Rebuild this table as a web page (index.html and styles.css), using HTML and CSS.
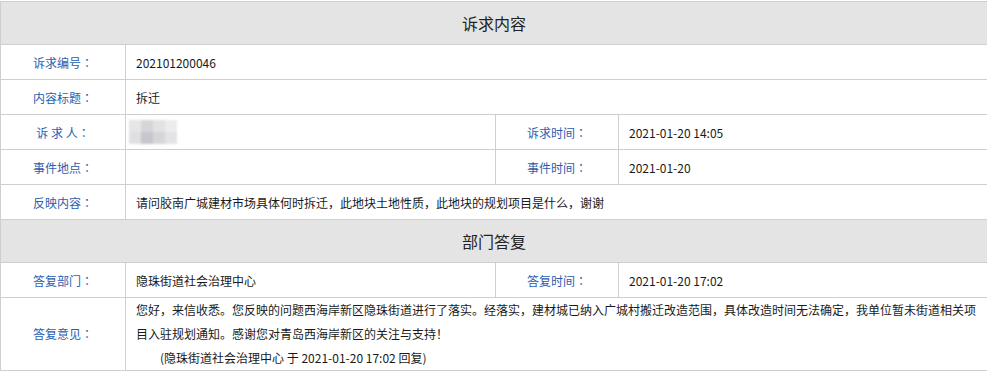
FILE: index.html
```html
<!DOCTYPE html>
<html lang="zh-CN">
<head>
<meta charset="utf-8">
<title>诉求内容</title>
<link rel="stylesheet" href="styles.css">
</head>
<body>
<table class="detail">
  <colgroup>
    <col class="c1"><col class="c2"><col class="c3"><col class="c4">
  </colgroup>
  <tr class="head"><th colspan="4">诉求内容</th></tr>
  <tr class="row"><td class="label">诉求编号<span class="colon" lang="ja">：</span></td><td class="value" colspan="3">202101200046</td></tr>
  <tr class="row"><td class="label">内容标题<span class="colon" lang="ja">：</span></td><td class="value" colspan="3">拆迁</td></tr>
  <tr class="row">
    <td class="label">诉&nbsp;求&nbsp;人<span class="colon" lang="ja">：</span></td>
    <td class="value"><span class="mosaic"><i class="m1"></i><i class="m2"></i><i class="m3"></i><i class="m4"></i><i class="m5"></i><i class="m6"></i><i class="m7"></i><i class="m8"></i></span></td>
    <td class="label">诉求时间<span class="colon" lang="ja">：</span></td>
    <td class="value">2021-01-20 14:05</td>
  </tr>
  <tr class="row">
    <td class="label">事件地点<span class="colon" lang="ja">：</span></td>
    <td class="value"></td>
    <td class="label">事件时间<span class="colon" lang="ja">：</span></td>
    <td class="value">2021-01-20</td>
  </tr>
  <tr class="row"><td class="label">反映内容<span class="colon" lang="ja">：</span></td><td class="value" colspan="3">请问胶南广城建材市场具体何时拆迁，此地块土地性质，此地块的规划项目是什么，谢谢</td></tr>
  <tr class="head"><th colspan="4">部门答复</th></tr>
  <tr class="row">
    <td class="label">答复部门<span class="colon" lang="ja">：</span></td>
    <td class="value">隐珠街道社会治理中心</td>
    <td class="label">答复时间<span class="colon" lang="ja">：</span></td>
    <td class="value">2021-01-20 17:02</td>
  </tr>
  <tr class="reply">
    <td class="label">答复意见<span class="colon" lang="ja">：</span></td>
    <td class="value" colspan="3">
      <div class="answer">您好，来信收悉。您反映的问题西海岸新区隐珠街道进行了落实。经落实，建材城已纳入广城村搬迁改造范围，具体改造时间无法确定，我单位暂未街道相关项目入驻规划通知。感谢您对青岛西海岸新区的关注与支持！</div>
      <div class="sign">(隐珠街道社会治理中心 于 2021-01-20 17:02 回复)</div>
    </td>
  </tr>
</table>
</body>
</html>
```
FILE: styles.css
```css
html, body {
  margin: 0;
  padding: 0;
  background: #fff;
}
body {
  padding-top: 1px;
  font-family: "Noto Sans CJK SC", "Noto Sans", sans-serif;
  font-size: 12px;
  color: #1a1a1a;
}
.detail {
  width: 987px;
  border-collapse: collapse;
  table-layout: fixed;
}
.c1 { width: 125px; }
.c2 { width: 370px; }
.c3 { width: 123px; }
.c4 { width: 369px; }
.detail th,
.detail td {
  border: 1px solid #cfcfcf;
  padding: 0;
}
.head th {
  height: 42px;
  background: #e4e4e4;
  font-size: 16px;
  font-weight: normal;
  color: #222;
  text-align: center;
}
.row td {
  height: 34px;
}
.label {
  text-align: center;
  color: #2a5eb0;
}
.colon {
  font-family: "Noto Sans CJK JP", "Noto Sans CJK SC", sans-serif;
}
.value {
  text-align: left;
  padding: 0 8px 0 10px !important;
  color: #1a1a1a;
}
.reply td {
  height: 72px;
  line-height: 24px;
}
.sign {
  padding-left: 24px;
}
.mosaic {
  display: inline-grid;
  grid-template-columns: repeat(4, 12px);
  grid-template-rows: repeat(2, 12px);
  vertical-align: middle;
  margin-left: -7px;
  filter: blur(0.8px);
}
.mosaic i { display: block; }
.m1 { background: #e6e6e8; }
.m2 { background: #d6d5d8; }
.m3 { background: #e2e1e4; }
.m4 { background: #ececee; }
.m5 { background: #dfdee1; }
.m6 { background: #c8c6cc; }
.m7 { background: #d6d6d8; }
.m8 { background: #e3e3e5; }
```
